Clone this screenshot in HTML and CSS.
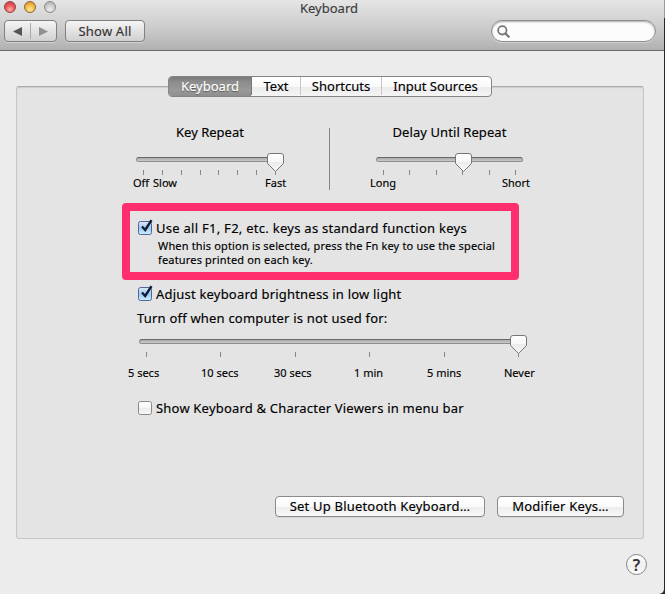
FILE: index.html
```html
<!DOCTYPE html>
<html lang="en">
<head>
<meta charset="utf-8">
<title>Keyboard</title>
<link rel="stylesheet" href="styles.css">
</head>
<body>
<div class="desktop">
<div class="window">
  <header class="toolbar">
    <div class="titlebar">
      <div class="lights"><i class="light red"></i><i class="light amber"></i><i class="light gray"></i></div>
      <h1><span class="t-title">Keyboard</span></h1>
    </div>
    <div class="tools">
      <div class="nav">
        <svg width="51" height="20" viewBox="0 0 51 20"><path d="M8 10.500 17 6v9z" fill="#555"/><path d="M25.500 2v16" stroke="#aaa"/><path d="M43 10.500 34 6v9z" fill="#909090"/></svg>
      </div>
      <button class="tool-button"><span class="t-showall">Show All</span></button>
      <div class="search">
        <svg width="16" height="16" viewBox="0 0 16 16" fill="none" stroke="#777"><circle cx="6.300" cy="6.300" r="4.200" stroke-width="1.800"/><path d="m9.500 9.500 3.200 3.200" stroke-width="2.300" stroke-linecap="round"/></svg>
      </div>
    </div>
  </header>
  <main class="panel">
    <nav class="tabs">
      <a class="tab tab-keyboard active"><span class="t-tab1">Keyboard</span></a>
      <a class="tab tab-text"><span class="t-tab2">Text</span></a>
      <a class="tab tab-shortcuts"><span class="t-tab3">Shortcuts</span></a>
      <a class="tab tab-input"><span class="t-tab4">Input Sources</span></a>
    </nav>
    <section class="rates">
      <div class="rate rate-repeat">
        <h2><span class="t-repeat">Key Repeat</span></h2>
        <div class="slider">
          <div class="track"></div>
          <div class="ticks"><i></i><i></i><i></i><i></i><i></i><i></i><i></i><i></i></div>
          <svg class="thumb" width="17" height="20" viewBox="0 0 17 20"><path d="M3 .5h11Q16.500.5 16.500 3v7.500L8.500 18.500 .5 10.500V3Q.5.500 3 .5Z" fill="url(#knob)" stroke="#777"/></svg>
        </div>
        <div class="labels"><span class="t-off">Off</span><span class="t-slow">Slow</span><span class="t-fast">Fast</span></div>
      </div>
      <div class="divider"></div>
      <div class="rate rate-delay">
        <h2><span class="t-delay">Delay Until Repeat</span></h2>
        <div class="slider">
          <div class="track"></div>
          <div class="ticks"><i></i><i></i><i></i><i></i><i></i><i></i></div>
          <svg class="thumb" width="17" height="20" viewBox="0 0 17 20"><path d="M3 .5h11Q16.500.5 16.500 3v7.500L8.500 18.500 .5 10.500V3Q.5.500 3 .5Z" fill="url(#knob)" stroke="#777"/></svg>
        </div>
        <div class="labels"><span class="t-long">Long</span><span class="t-short">Short</span></div>
      </div>
    </section>
    <section class="highlight">
      <label class="check"><svg class="box" width="16" height="17" viewBox="0 0 16 17"><rect x=".5" y="2.500" width="13" height="13" rx="2" fill="url(#blue)" stroke="#52649a"/><path d="m4 7.500 3.200 3.500 6.300-9.800" fill="none" stroke="#101c38" stroke-width="2.400"/></svg><span class="t-use">Use all F1, F2, etc. keys as standard function keys</span></label>
      <p><span class="t-when">When this option is selected, press the Fn key to use the special</span><br><span class="t-feat">features printed on each key.</span></p>
    </section>
    <section class="brightness">
      <label class="check"><svg class="box" width="16" height="17" viewBox="0 0 16 17"><rect x=".5" y="2.500" width="13" height="13" rx="2" fill="url(#blue)" stroke="#52649a"/><path d="m4 7.500 3.200 3.500 6.300-9.800" fill="none" stroke="#101c38" stroke-width="2.400"/></svg><span class="t-adjust">Adjust keyboard brightness in low light</span></label>
      <div class="timeout-title"><span class="t-turn">Turn off when computer is not used for:</span></div>
      <div class="slider slider-timeout">
        <div class="track"></div>
        <div class="ticks"><i></i><i></i><i></i><i></i><i></i><i></i></div>
        <svg class="thumb" width="17" height="20" viewBox="0 0 17 20"><path d="M3 .5h11Q16.500.5 16.500 3v7.500L8.500 18.500 .5 10.500V3Q.5.500 3 .5Z" fill="url(#knob)" stroke="#777"/></svg>
      </div>
      <div class="labels labels-timeout"><span class="t-5s">5 secs</span><span class="t-10s">10 secs</span><span class="t-30s">30 secs</span><span class="t-1m">1 min</span><span class="t-5m">5 mins</span><span class="t-never">Never</span></div>
      <label class="check viewers"><svg class="box" width="16" height="17" viewBox="0 0 16 17"><rect x=".5" y="2.500" width="13" height="13" rx="2" fill="url(#knob)" stroke="#888"/></svg><span class="t-show">Show Keyboard &amp; Character Viewers in menu bar</span></label>
    </section>
    <div class="actions">
      <button class="push bluetooth"><span class="t-blue">Set Up Bluetooth Keyboard…</span></button>
      <button class="push modifier"><span class="t-mod">Modifier Keys…</span></button>
    </div>
  </main>
  <footer><button class="help">?</button></footer>
</div>
</div>
<svg class="defs" width="0" height="0"><defs>
  <linearGradient id="knob" x2="0" y2="1"><stop stop-color="#fff"/><stop offset=".48" stop-color="#f7f7f7"/><stop offset=".5" stop-color="#ececec"/><stop offset="1" stop-color="#f8f8f8"/></linearGradient>
  <linearGradient id="blue" x2="0" y2="1"><stop stop-color="#dcecfa"/><stop offset=".5" stop-color="#9fc9f0"/><stop offset="1" stop-color="#c9f0ff"/></linearGradient>
</defs></svg>
</body>
</html>
```
FILE: styles.css
```css
* { box-sizing: border-box; }
html, body { margin: 0; height: 594px; overflow: hidden; }
body { font: 13px/16px "Noto Sans", "Open Sans", sans-serif; color: #000; -webkit-text-stroke: .15px; }
span { white-space: nowrap; }
button { font: inherit; padding: 0; }
svg { display: block; flex: none; }
.defs { position: absolute; }
.desktop { width: 665px; height: 594px; background: linear-gradient(#999 18px, #222832 18px); }
.window { width: 664px; height: 594px; background: #ececec; border-radius: 0 0 5px 0; overflow: hidden; }
.toolbar { height: 51px; background: linear-gradient(#e5e5e5, #cccccc 55%, #b1b1b1); border-bottom: 1px solid #6b6b6b; }
.titlebar { height: 20px; display: flex; }
.lights { display: flex; gap: 8px; padding: 1px 0 0 4px; width: 300px; }
.light { width: 12px; height: 12px; border-radius: 50%; border: 1px solid #777; }
.red { background: radial-gradient(circle at 50% 75%, #ffb0a8, #ec5558 50%, #c03a40); border-color: #8e4547; }
.amber { background: radial-gradient(circle at 50% 75%, #ffeb95, #f2b543 55%, #c88425); border-color: #8d6832; }
.gray { background: radial-gradient(circle at 50% 75%, #eee, #c8c8c8 55%, #aaa); border-color: #888; }
h1, h2, p { margin: 0; font-size: 13px; font-weight: 400; }
h1 { color: #3c3c3c; line-height: 16px; }
.tools { display: flex; padding-left: 4px; }
.nav, .tool-button { height: 22px; border: 1px solid #808080; border-radius: 4px; background: linear-gradient(#f5f5f5, #d0d0d0); box-shadow: 0 1px #d0d0d0; }
.nav { width: 53px; margin-right: 8px; }
.tool-button { width: 80px; color: #333; }
.search { width: 165px; height: 22px; margin-left: 346px; border: 1px solid #8d8d8d; border-radius: 11px; background: #fcfcfc; box-shadow: inset 0 1px 2px #aaa, 0 1px #d0d0d0; padding: 3px 4px; }
.panel { width: 628px; height: 453px; margin: 35px 0 0 16px; background: #e4e4e4; border: 1px solid #c6c6c6; border-top-color: #aaa; border-radius: 3px; box-shadow: inset 0 1px 1px #ccc; display: flex; flex-direction: column; }
.tabs { display: flex; height: 21px; width: 324px; margin: -11px 0 0 151px; border: 1px solid #858585; border-radius: 4px; background: linear-gradient(#fff, #fafafa 50%, #ececec 54%, #f5f5f5); overflow: hidden; flex: none; line-height: 16px; }
.tab { height: 18px; display: flex; align-items: center; justify-content: center; border-left: 1px solid #c5c5c5; }
.tab-keyboard { height: 19px; width: 82px; border: 0; padding-bottom: 1px; }
.tab-text { width: 49px; border-color: #777; }
.tab-shortcuts { width: 81px; }
.tab-input { width: 108px; }
.active { color: #fff; background: linear-gradient(#777, #8d8d8d 25%, #999 70%, #8e8e8e); text-shadow: 0 1px 1px #555; }
.rates { height: 106px; display: flex; padding-left: 119px; flex: none; }
.rate { padding-top: 27px; }
.rate-repeat { width: 149px; }
.divider { width: 1px; height: 62px; margin: 31px 46px 0 44px; background: #858585; }
.rate-delay { width: 147px; }
h2 { height: 16px; display: flex; justify-content: center; }
.rate-repeat h2 { padding-right: 1px; }
.t-delay { letter-spacing: .08px; }
.slider { position: relative; margin-top: 17px; height: 20px; }
.track { height: 5px; border: 1px solid #8e8e8e; border-top-color: #686868; border-radius: 3px; background: linear-gradient(#aaa, #cacaca); }
.rate-repeat .track { width: 147px; }
.ticks { display: flex; justify-content: space-between; padding: 8px 9px 0 7px; }
.ticks i { width: 1px; height: 5px; background: #888; }
.thumb { position: absolute; left: 131px; top: -4px; }
.rate-delay .thumb { left: 79px; }
.rate-delay .ticks { padding-right: 7px; }
.slider-timeout .ticks { padding-right: 7px; }
.slider-timeout .thumb { left: 371px; }
.labels { display: flex; font-size: 11px; line-height: 14px; }
.rate .labels { margin-top: -1px; }
.labels .t-off { width: 18px; margin-left: -3px; }
.labels .t-slow { width: 112px; margin-left: 2px; }
.labels .t-long { width: 132px; margin-left: -6px; flex: none; }
.t-off, .t-slow, .t-fast, .t-short { flex: none; }
.highlight { width: 397px; height: 77px; margin-left: 105px; padding: 8px 8px; border: 8px solid #ff2e6d; border-radius: 4px; flex: none; }
.check { display: flex; height: 17px; gap: 2px; }
.check > span { line-height: 18px; }
.highlight p { font-size: 11px; line-height: 14px; padding: 3px 0 0 20px; }
.t-use { letter-spacing: .27px; }
.t-when { letter-spacing: .16px; }
.t-feat { letter-spacing: .17px; }
.t-adjust, .t-turn, .t-show { letter-spacing: .2px; }
.t-showall, .t-blue { letter-spacing: .2px; }
.t-mod { letter-spacing: .24px; }
.brightness { padding: 5px 0 0 120px; height: 216px; flex: none; }
.timeout-title { margin-top: 8px; height: 16px; }
.slider-timeout { width: 387px; margin: 13px 0 0 2px; }
.labels-timeout { margin: 7px 0 0 -9px; }
.labels-timeout span { width: 73px; }
.labels-timeout span:nth-child(3) { width: 80px; }
.labels-timeout span:nth-child(5) { width: 77px; }
.viewers { margin-top: 19px; }
.brightness > .check { margin-left: 1px; }
.actions { display: flex; gap: 12px; padding-left: 258px; }
.push { height: 21px; border: 1px solid #8b8b8b; border-radius: 4px; background: linear-gradient(#fff, #fafafa 50%, #ededed 54%, #f8f8f8); color: #000; box-shadow: 0 1px #d4d4d4; line-height: 17px; }
.bluetooth { width: 210px; }
.modifier { width: 127px; }
footer { padding: 15px 0 0 626px; }
.help { width: 21px; height: 21px; border-radius: 50%; border: 1px solid #858585; background: linear-gradient(#fff, #efefef 60%, #fff); font-weight: 600; font-size: 16px; line-height: 18px; color: #333; display: block; }
```
